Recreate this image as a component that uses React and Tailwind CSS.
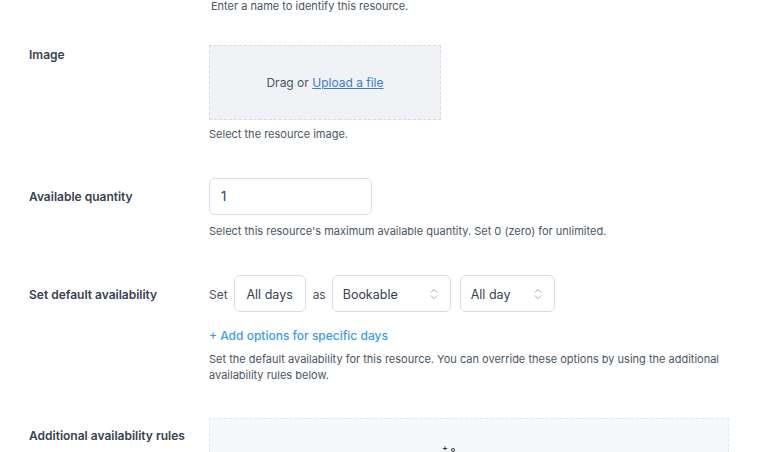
import { ChevronsUpDown } from 'lucide-react'

const FONT = { fontFamily: 'Inter, "Noto Sans", sans-serif' }

function Row({ label, children, className = '' }) {
  return (
    <div className={`flex ${className}`}>
      <div className="w-[209px] shrink-0 pl-[29px] text-[12px] font-semibold text-[#374151]">{label}</div>
      <div className="flex-1 min-w-0">{children}</div>
    </div>
  )
}

function Help({ children, className = '' }) {
  return <p className={`text-[11px] leading-4 text-[#4b5563] ${className}`}>{children}</p>
}

function Select({ value, w }) {
  return (
    <div className={`h-[37px] ${w} rounded-md border border-[#d9dde3] bg-white flex items-center justify-between pl-[10px] pr-[9px] text-[12.5px] text-[#374151]`}>
      <span className="pt-[3px]">{value}</span>
      <ChevronsUpDown size={14} strokeWidth={1.5} className="text-[#9ca3af]" />
    </div>
  )
}

export default function App() {
  return (
    <div className="w-[769px] h-[452px] overflow-hidden bg-white" style={FONT}>
      <div className="pl-[211px]">
        <p className="text-[11px] leading-[12px] text-[#4b5563]">Enter a name to identify this resource.</p>
      </div>

      <Row label={<div className="mt-[1px]">Image</div>} className="mt-[33px]">
        <div className="w-[232px] h-[75px] border border-dashed border-[#d9dde3] bg-[#f0f2f6] flex items-center justify-center text-[12px] text-[#4b5563]">
          Drag or&nbsp;<span className="text-[#3b7bd1] underline">Upload a file</span>
        </div>
        <Help className="mt-[6px]">Select the resource image.</Help>
      </Row>

      <Row label={<div className="mt-[10px]">Available quantity</div>} className="mt-[36px]">
        <div className="w-[163px] h-[37px] rounded-md border border-[#d9dde3] flex items-center pl-[11px] text-[13px] text-[#374151]">1</div>
        <Help className="mt-[8px]">Select this resource's maximum available quantity. Set 0 (zero) for unlimited.</Help>
      </Row>

      <Row label={<div className="mt-[11px]">Set default availability</div>} className="mt-[36px]">
        <div className="flex items-center text-[12px] text-[#4b5563]">
          <span className="pt-[2px]">Set</span>
          <div className="ml-[6px] h-[37px] w-[72px] rounded-md border border-[#d9dde3] flex items-center justify-center text-[12.5px] text-[#374151]">
            <span className="pt-[3px]">All days</span>
          </div>
          <span className="ml-[7px] pt-[2px]">as</span>
          <div className="ml-[6px]"><Select value="Bookable" w="w-[119px]" /></div>
          <div className="ml-[9px]"><Select value="All day" w="w-[95px]" /></div>
        </div>
        <div className="mt-[15px] text-[12px] font-medium text-[#3c9be6]">+ Add options for specific days</div>
        <Help className="mt-[6px] w-[530px]">Set the default availability for this resource. You can override these options by using the additional availability rules below.</Help>
      </Row>

      <Row label={<div className="mt-[9px]">Additional availability rules</div>} className="mt-[35px]">
        <div className="relative w-[520px] h-[60px] border border-dashed border-[#e3e7ec] bg-[#f5f8fb]">
          <span className="absolute left-[232px] top-[24px] text-[9px] leading-none text-[#111]">+</span>
          <span className="absolute left-[241px] top-[29px] w-[4px] h-[4px] rounded-full border border-[#333]" />
        </div>
      </Row>
    </div>
  )
}
